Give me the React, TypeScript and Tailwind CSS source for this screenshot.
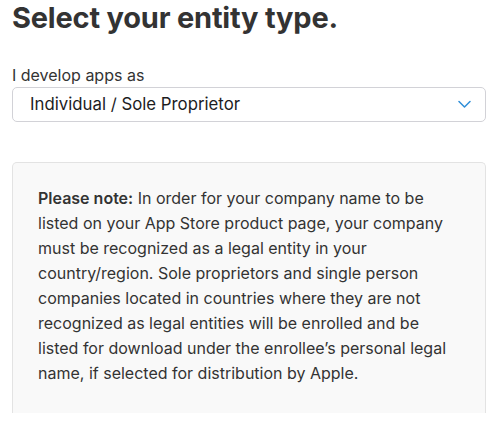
import React from "react";

const App: React.FC = () => {
  return (
    <div className="min-h-screen bg-white pl-3 pr-4 text-[#333333] font-['Inter','Liberation_Sans',sans-serif]">
      <h1 className="text-[29px] leading-[36px] font-bold tracking-[-0.2px] text-[#333333]">
        Select your entity type.
      </h1>

      <div className="mt-[29px]">
        <label className="block text-[16px] leading-[20px] text-[#333333]">
          I develop apps as
        </label>
        <div className="mt-[2px] flex h-[35px] items-center justify-between rounded-[5px] border border-[#d2d2d7] bg-white pl-[17px] pr-[14px]">
          <span className="text-[16.8px] text-[#1d1d1f]">
            Individual / Sole Proprietor
          </span>
          <svg width="13" height="9" viewBox="0 0 13 9" fill="none">
            <path
              d="M1 1.5 L6.5 7 L12 1.5"
              stroke="#2f8fd8"
              strokeWidth="1.5"
              strokeLinecap="round"
              strokeLinejoin="round"
            />
          </svg>
        </div>
      </div>

      <div className="mt-[40px] h-[251px] overflow-hidden rounded-t-[5px] border border-b-0 border-[#e3e3e3] bg-[#f9f9f9] px-[25px] pt-[23px]">
        <p className="text-[16px] leading-[25px] text-[#333333]">
          <strong className="font-semibold">Please note:</strong> In order for
          your company name to be listed on your App Store product page, your
          company must be recognized as a legal entity in your country/region.
          Sole proprietors and single person companies located in countries
          where they are not recognized as legal entities will be enrolled and
          be listed for download under the enrollee’s personal legal name, if
          selected for distribution by Apple.
        </p>
      </div>
    </div>
  );
};

export default App;
